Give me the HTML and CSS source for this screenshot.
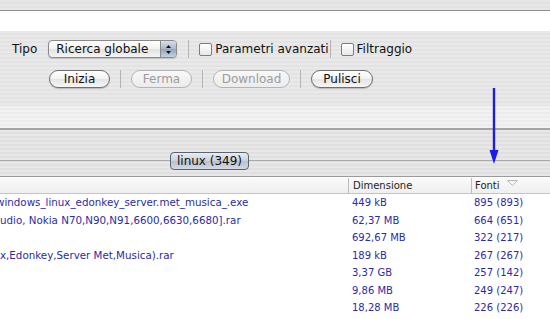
FILE: index.html
```html
<!DOCTYPE html>
<html lang="it">
<head>
  <meta charset="UTF-8">
  <title>Ricerca</title>
  <link rel="stylesheet" href="styles.css">
</head>
<body>

  <div class="window">
    <div class="topbar"></div>
    <div class="searchfield"></div>

    <div class="toolbar">
      <div class="opts">
        <span class="label">Tipo</span>
        <div class="popup">
          <span class="popup-text">Ricerca globale</span>
          <span class="stepper">
            <svg width="7" height="11" viewBox="0 0 7 11"><path d="M3.5 1 L6 4 H1 Z M3.5 10 L6 7 H1 Z" fill="#111"/></svg>
          </span>
        </div>
        <span class="sep"></span>
        <label class="check"><span class="box"></span>Parametri avanzati</label>
        <span class="sep tight"></span>
        <label class="check"><span class="box"></span>Filtraggio</label>
      </div>

      <div class="actions">
        <button class="btn w-inizia">Inizia</button>
        <span class="sep"></span>
        <button class="btn w-ferma" disabled>Ferma</button>
        <span class="sep"></span>
        <button class="btn w-download" disabled>Download</button>
        <span class="sep"></span>
        <button class="btn w-pulisci">Pulisci</button>
      </div>
    </div>

    <div class="band-light"></div>
    <div class="tabbar">
      <span class="tab">linux (349)</span>
    </div>

    <div class="results">
      <div class="head">
        <div class="col-name"></div>
        <div class="col-size">Dimensione</div>
        <div class="col-src">Fonti
          <svg class="sort" width="11" height="6" viewBox="0 0 11 6"><path d="M0.5 0.5 H10.5 L5.5 5.5 Z" fill="none" stroke="#b8b8b8"/></svg>
        </div>
      </div>

      <div class="row">
        <div class="col-name shift1">windows_linux_edonkey_server.met_musica_.exe</div>
        <div class="col-size">449 kB</div>
        <div class="col-src">895 (893)</div>
      </div>
      <div class="row">
        <div class="col-name">udio, Nokia N70,N90,N91,6600,6630,6680].rar</div>
        <div class="col-size">62,37 MB</div>
        <div class="col-src">664 (651)</div>
      </div>
      <div class="row">
        <div class="col-name"></div>
        <div class="col-size">692,67 MB</div>
        <div class="col-src">322 (217)</div>
      </div>
      <div class="row">
        <div class="col-name">x,Edonkey,Server Met,Musica).rar</div>
        <div class="col-size">189 kB</div>
        <div class="col-src">267 (267)</div>
      </div>
      <div class="row">
        <div class="col-name"></div>
        <div class="col-size">3,37 GB</div>
        <div class="col-src">257 (142)</div>
      </div>
      <div class="row">
        <div class="col-name"></div>
        <div class="col-size">9,86 MB</div>
        <div class="col-src">249 (247)</div>
      </div>
      <div class="row">
        <div class="col-name"></div>
        <div class="col-size">18,28 MB</div>
        <div class="col-src">226 (226)</div>
      </div>
    </div>

    <!-- annotation arrow drawn over the screenshot -->
    <svg class="arrow" width="12" height="78" viewBox="0 0 12 78">
      <line x1="6" y1="0" x2="6" y2="66" stroke="#1c1ce6" stroke-width="2.4"/>
      <path d="M1.5 62 L10.5 62 L6 76 Z" fill="#1c1ce6"/>
    </svg>
  </div>

</body>
</html>
```

FILE: styles.css
```css
body {
  margin: 0;
  font-family: 'DejaVu Sans', 'Liberation Sans', sans-serif;
  color: #111;
}

.window {
  position: relative;
  width: 550px;
  height: 319px;
  overflow: hidden;
  background: #fff;
}

.topbar {
  height: 10px;
  background: repeating-linear-gradient(to bottom, #e6e6e6 0, #e6e6e6 2px, #e1e1e1 2px, #e1e1e1 4px);
  border-bottom: 1px solid #8e8e8e;
}

.searchfield {
  height: 20px;
  background: #fff;
}

.toolbar {
  height: 75px;
  padding-top: 9px;
  box-sizing: border-box;
  background: repeating-linear-gradient(to bottom, #e9e9e9 0, #e9e9e9 2px, #e3e3e3 2px, #e3e3e3 4px);
  font-size: 12px;
}

.opts {
  display: flex;
  align-items: center;
  height: 18px;
  padding-left: 12px;
}

.label {
  margin-right: 11px;
}

.popup {
  display: flex;
  align-items: center;
  width: 129px;
  height: 18px;
  box-sizing: border-box;
  border: 1px solid #8a8a8a;
  border-radius: 4px;
  background: linear-gradient(to bottom, #ffffff, #f2f2f2 50%, #e2e2e2 51%, #f4f4f4);
  box-shadow: 0 1px 1px rgba(0,0,0,0.15);
  overflow: hidden;
}

.popup-text {
  flex: 1;
  padding-left: 7px;
}

.stepper {
  display: flex;
  align-items: center;
  justify-content: center;
  width: 15px;
  height: 100%;
  border-left: 1px solid #8a8a8a;
  background: linear-gradient(to bottom, #d6e0ec, #a7b6c9 50%, #93a5bc 51%, #c3d0e0);
}

.sep {
  width: 1px;
  height: 18px;
  background: #b4b4b4;
  margin: 0 10px 0 11px;
}

.sep.tight {
  margin-left: 1px;
}

.check {
  display: flex;
  align-items: center;
}

.box {
  width: 11px;
  height: 11px;
  margin-right: 3px;
  border: 1px solid #7c7c7c;
  border-radius: 2px;
  background: linear-gradient(to bottom, #fff, #e8e8e8);
}

.actions {
  display: flex;
  align-items: center;
  height: 18px;
  margin-top: 12px;
  padding-left: 49px;
}

.actions .sep {
  margin: 0 10px;
}

.btn {
  height: 18px;
  padding: 0;
  font-family: inherit;
  font-size: 12px;
  color: #111;
  border: 1px solid #6f6f6f;
  border-radius: 9px;
  background: linear-gradient(to bottom, #ffffff, #f3f3f3 50%, #e4e4e4 51%, #f6f6f6);
  box-shadow: 0 1px 1px rgba(0,0,0,0.2);
}

.btn:disabled {
  color: #9c9c9c;
  border-color: #b4b4b4;
  box-shadow: none;
  background: linear-gradient(to bottom, #f8f8f8, #ececec);
}

.w-inizia { width: 61px; }
.w-ferma { width: 61px; }
.w-download { width: 77px; }
.w-pulisci { width: 62px; }

.band-light {
  height: 22px;
  background: repeating-linear-gradient(to bottom, #f2f2f2 0, #f2f2f2 2px, #ececec 2px, #ececec 4px);
  border-bottom: 2px solid #a4a4a4;
}

.tabbar {
  height: 47px;
  padding-top: 20px;
  box-sizing: border-box;
  padding-left: 170px;
  background:
    linear-gradient(to bottom, transparent 30px, #a8a8a8 30px, #a8a8a8 31px, transparent 31px),
    repeating-linear-gradient(to bottom, #e7e7e7 0, #e7e7e7 2px, #e0e0e0 2px, #e0e0e0 4px);
  border-bottom: 1px solid #9a9a9a;
}

.tab {
  display: inline-block;
  width: 79px;
  height: 18px;
  box-sizing: border-box;
  font-size: 12px;
  line-height: 16px;
  text-align: center;
  color: #111;
  border: 1px solid #5c6370;
  border-radius: 4px;
  background: linear-gradient(to bottom, #e9edf3, #c9d0da 50%, #b9c1cd 51%, #d3d9e2);
}

.results {
  padding-top: 1px;
  font-size: 10px;
}

.head {
  display: flex;
  height: 15px;
  line-height: 15px;
  color: #222;
  background: linear-gradient(to bottom, #fafafa, #efefef);
  border-bottom: 1px solid #c4c4c4;
}

.head .col-size,
.head .col-src {
  border-left: 1px solid #bdbdbd;
}

.row {
  display: flex;
  height: 17.5px;
  line-height: 17.5px;
  color: #2b2ba6;
}

.col-name {
  width: 348px;
  white-space: nowrap;
  overflow: hidden;
}

.row .col-name {
  font-size: 10.3px;
}

.shift1 {
  text-indent: -4px;
}

.col-size {
  width: 123px;
  padding-left: 4px;
  box-sizing: border-box;
}

.col-src {
  flex: 1;
  padding-left: 3px;
  white-space: nowrap;
}

.sort {
  margin-left: 4px;
  vertical-align: 3px;
}

.arrow {
  position: absolute;
  left: 488px;
  top: 88px;
}
```
